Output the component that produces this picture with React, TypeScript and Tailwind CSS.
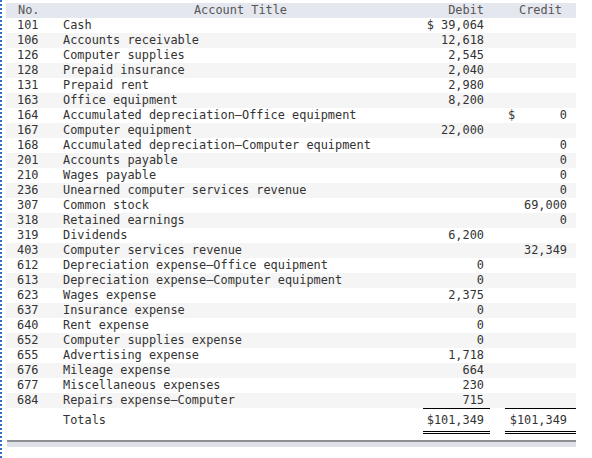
import React from "react";

type Row = { no: string; title: string; debit?: string; credit?: string; creditSign?: boolean };

const rows: Row[] = [
  { no: "101", title: "Cash", debit: "$ 39,064" },
  { no: "106", title: "Accounts receivable", debit: "12,618" },
  { no: "126", title: "Computer supplies", debit: "2,545" },
  { no: "128", title: "Prepaid insurance", debit: "2,040" },
  { no: "131", title: "Prepaid rent", debit: "2,980" },
  { no: "163", title: "Office equipment", debit: "8,200" },
  { no: "164", title: "Accumulated depreciation\u2014Office equipment", credit: "0", creditSign: true },
  { no: "167", title: "Computer equipment", debit: "22,000" },
  { no: "168", title: "Accumulated depreciation\u2014Computer equipment", credit: "0" },
  { no: "201", title: "Accounts payable", credit: "0" },
  { no: "210", title: "Wages payable", credit: "0" },
  { no: "236", title: "Unearned computer services revenue", credit: "0" },
  { no: "307", title: "Common stock", credit: "69,000" },
  { no: "318", title: "Retained earnings", credit: "0" },
  { no: "319", title: "Dividends", debit: "6,200" },
  { no: "403", title: "Computer services revenue", credit: "32,349" },
  { no: "612", title: "Depreciation expense\u2014Office equipment", debit: "0" },
  { no: "613", title: "Depreciation expense\u2014Computer equipment", debit: "0" },
  { no: "623", title: "Wages expense", debit: "2,375" },
  { no: "637", title: "Insurance expense", debit: "0" },
  { no: "640", title: "Rent expense", debit: "0" },
  { no: "652", title: "Computer supplies expense", debit: "0" },
  { no: "655", title: "Advertising expense", debit: "1,718" },
  { no: "676", title: "Mileage expense", debit: "664" },
  { no: "677", title: "Miscellaneous expenses", debit: "230" },
  { no: "684", title: "Repairs expense\u2014Computer", debit: "715" },
];

export default function App() {
  return (
    <div className="h-[458px] w-[592px] bg-white border-l-2 border-dotted border-[#2f6fd0] pt-[3px] pl-[4px] text-[11.9px] leading-[15px] text-[#333] font-['DejaVu_Sans_Mono',monospace]">
      <div className="w-[570px]">
        {/* Header */}
        <div className="flex h-[15px] bg-[#e4e7ee] text-[#555]">
          <div className="w-[52px] pl-[12px]">No.</div>
          <div className="w-[365px] text-center">Account Title</div>
          <div className="w-[67px] pr-[6px] text-right">Debit</div>
          <div className="w-[15px]" />
          <div className="w-[71px] text-center">Credit</div>
        </div>

        {rows.map((r, i) => (
          <div key={r.no} className={`flex h-[15px] ${i % 2 === 1 ? "bg-[#f5f5f5]" : "bg-white"}`}>
            <div className="w-[52px] pl-[11px]">{r.no}</div>
            <div className="w-[365px] pl-[5px] whitespace-nowrap">{r.title}</div>
            <div className="w-[67px] pr-[6px] text-right whitespace-nowrap">{r.debit ?? ""}</div>
            <div className="w-[15px]" />
            <div className="w-[71px] pl-[3px] pr-[9px] flex justify-between">
              <span>{r.creditSign ? "$" : ""}</span>
              <span>{r.credit ?? ""}</span>
            </div>
          </div>
        ))}

        {/* Totals */}
        <div className="flex h-[27px] bg-white">
          <div className="w-[52px]" />
          <div className="w-[365px] pl-[5px] pt-[5px]">Totals</div>
          <div className="w-[67px] border-t border-black pt-[4px]">
            <div className="h-[21px] border-b-[3px] border-double border-black pr-[6px] text-right">$101,349</div>
          </div>
          <div className="w-[15px]" />
          <div className="w-[71px] border-t border-black pt-[4px]">
            <div className="h-[21px] border-b-[3px] border-double border-black pr-[9px] text-right">$101,349</div>
          </div>
        </div>

        {/* Bottom bar */}
        <div className="mt-[5px] ml-[1px] h-[7px] border-t-2 border-[#8d8f94] bg-[#dde0e9]" />
      </div>
    </div>
  );
}
